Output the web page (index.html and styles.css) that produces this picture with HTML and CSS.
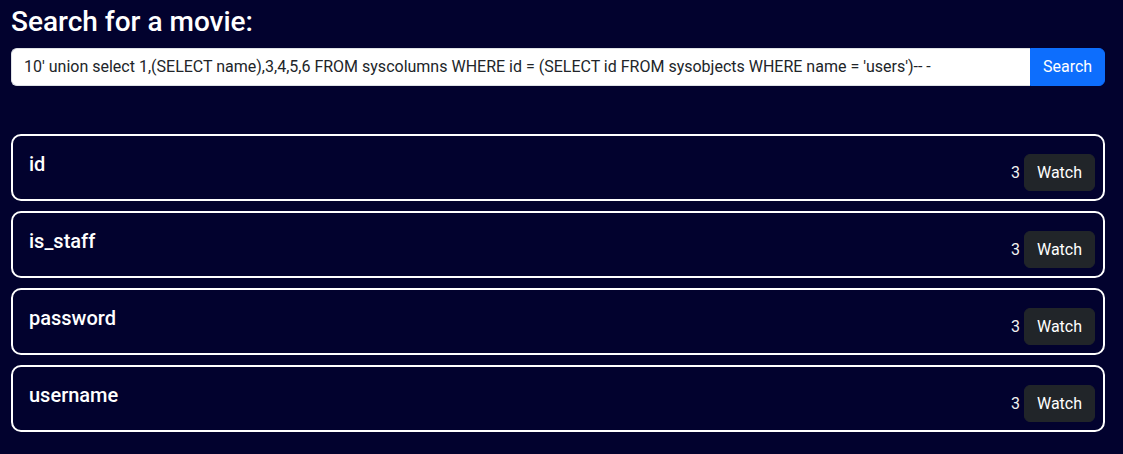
FILE: index.html
```html
<!DOCTYPE html>
<html lang="en">
<head>
<meta charset="utf-8">
<title>Movie search</title>
<link rel="stylesheet" href="styles.css">
</head>
<body>
<main class="page">
  <h3 class="page-title">Search for a movie:</h3>
  <form class="search">
    <input class="search-input" type="text" value="10' union select 1,(SELECT name),3,4,5,6 FROM syscolumns WHERE id = (SELECT id FROM sysobjects WHERE name = 'users')-- -">
    <button class="search-btn" type="button">Search</button>
  </form>
  <section class="results">
    <div class="card">
      <h5 class="card-title">id</h5>
      <div class="card-side"><span class="count">3</span><button class="watch" type="button">Watch</button></div>
    </div>
    <div class="card">
      <h5 class="card-title">is_staff</h5>
      <div class="card-side"><span class="count">3</span><button class="watch" type="button">Watch</button></div>
    </div>
    <div class="card">
      <h5 class="card-title">password</h5>
      <div class="card-side"><span class="count">3</span><button class="watch" type="button">Watch</button></div>
    </div>
    <div class="card">
      <h5 class="card-title">username</h5>
      <div class="card-side"><span class="count">3</span><button class="watch" type="button">Watch</button></div>
    </div>
  </section>
</main>
</body>
</html>
```
FILE: styles.css
```css
* { box-sizing: border-box; }
html, body {
  margin: 0;
  background: #02022e;
  color: #fff;
  font-family: Roboto, "Liberation Sans", sans-serif;
  font-size: 16px;
  line-height: 1.5;
}
.page {
  padding: 5px 18px 0 11px;
}
.page-title {
  margin: 0 0 9px 0;
  font-size: 28px;
  font-weight: 500;
  line-height: 34px;
}
.search {
  display: flex;
  height: 38px;
}
.search-input {
  flex: 1;
  min-width: 0;
  height: 38px;
  padding: 5px 12px 7px;
  border: 1px solid #dee2e6;
  border-right: 0;
  border-radius: 6px 0 0 6px;
  font-family: inherit;
  font-size: 16px;
  color: #212529;
  background: #fff;
  outline: none;
}
.search-btn {
  width: 75px;
  height: 38px;
  padding: 5px 12px 7px;
  border: 1px solid #0d6efd;
  border-radius: 0 6px 6px 0;
  background: #0d6efd;
  color: #fff;
  font-family: inherit;
  font-size: 16px;
}
.results {
  margin-top: 48px;
  display: flex;
  flex-direction: column;
  gap: 10px;
}
.card {
  display: flex;
  justify-content: space-between;
  align-items: flex-start;
  height: 67px;
  padding: 16px 8px 0 16px;
  border: 2px solid #fff;
  border-radius: 10px;
}
.card-title {
  margin: 0;
  font-size: 20px;
  font-weight: 500;
  line-height: 24px;
}
.card-side {
  display: flex;
  align-items: center;
  gap: 4px;
  margin-top: 2px;
}
.count {
  font-size: 16px;
  line-height: 24px;
  color: #f1f1f1;
}
.watch {
  height: 37px;
  padding: 6px 12px;
  border: 1px solid #212529;
  border-radius: 6px;
  background: #212529;
  color: #fff;
  font-family: inherit;
  font-size: 16px;
  line-height: 24px;
}
```
